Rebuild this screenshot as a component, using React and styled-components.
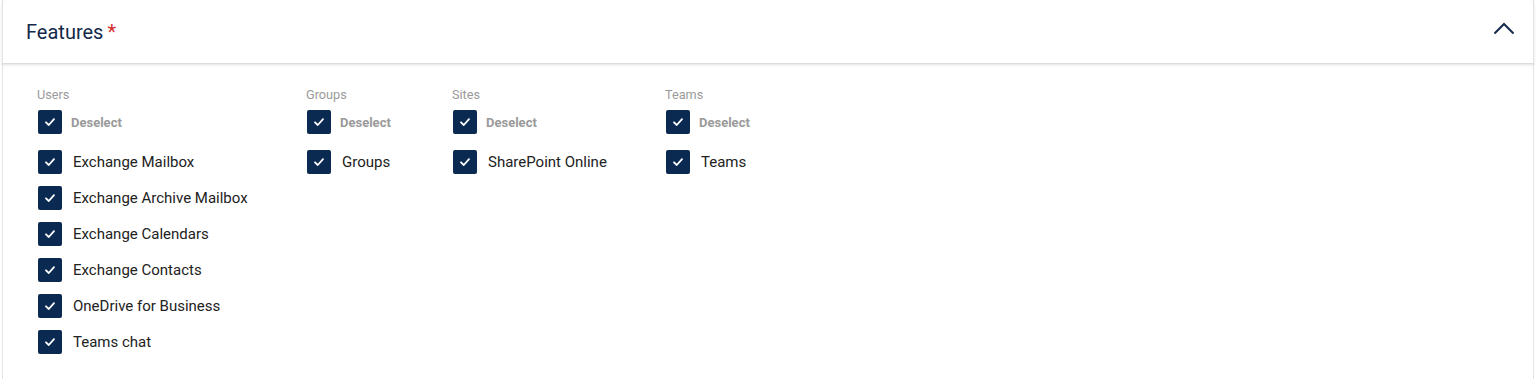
import React from 'react'
import styled, { createGlobalStyle } from 'styled-components'

const Global = createGlobalStyle`
  body {
    margin: 0;
    background: #fff;
    font-family: Roboto, "Liberation Sans", Arial, sans-serif;
  }
`

const Panel = styled.div`
  margin: 0 2px;
  height: 379px;
  border-left: 1px solid #e4e4e4;
  border-right: 1px solid #e4e4e4;
  box-sizing: border-box;
`

const Header = styled.div`
  display: flex;
  align-items: center;
  justify-content: space-between;
  height: 63px;
  padding: 0 18px 0 24px;
  border-bottom: 1px solid #dcdcdc;
  border-radius: 6px 6px 0 0;
  box-shadow: 0 1px 3px rgba(0, 0, 0, 0.12);
  margin: 0 -1px;
`

const Title = styled.div`
  font-size: 20px;
  color: #13294b;
  span {
    color: #d32f2f;
    margin-left: 4px;
  }
`

const Toggle = styled.svg`
  width: 24px;
  height: 24px;
`

const Body = styled.div`
  display: grid;
  grid-template-columns: 269px 146px 213px auto;
  padding: 24px 34px;
`

const Column = styled.div`
  display: flex;
  flex-direction: column;
`

const Label = styled.div`
  font-size: 12.7px;
  color: #9a9a9a;
  line-height: 14px;
  margin-bottom: 8px;
`

const Row = styled.label`
  display: flex;
  align-items: center;
  height: 36px;
  gap: 11px;
  font-size: 15px;
  color: #222;
  white-space: nowrap;
`

const DeselectRow = styled(Row)`
  height: 24px;
  gap: 9px;
  font-size: 13px;
  font-weight: 700;
  color: #9a9a9a;
  margin-bottom: 10px;
`

const Box = styled.span`
  width: 24px;
  height: 24px;
  border-radius: 2px;
  background: #0b2a52;
  display: flex;
  align-items: center;
  justify-content: center;
  flex-shrink: 0;
  margin-left: 1px;
`

const Check = () => (
  <Box>
    <svg width="12" height="12" viewBox="0 0 12 12">
      <path d="M2 6.3 L4.8 9 L10 3.2" fill="none" stroke="#fff" strokeWidth="1.8" strokeLinecap="round" strokeLinejoin="round" />
    </svg>
  </Box>
)

const groups = [
  {
    name: 'Users',
    items: [
      'Exchange Mailbox',
      'Exchange Archive Mailbox',
      'Exchange Calendars',
      'Exchange Contacts',
      'OneDrive for Business',
      'Teams chat',
    ],
  },
  { name: 'Groups', items: ['Groups'] },
  { name: 'Sites', items: ['SharePoint Online'] },
  { name: 'Teams', items: ['Teams'] },
]

const App = () => {
  return (
    <Panel>
      <Global />
      <Header>
        <Title>
          Features<span>*</span>
        </Title>
        <Toggle viewBox="0 0 24 24">
          <path d="M2.5 13.5 L12 4 L21.5 13.5" fill="none" stroke="#13294b" strokeWidth="2" />
        </Toggle>
      </Header>
      <Body>
        {groups.map(g => (
          <Column key={g.name}>
            <Label>{g.name}</Label>
            <DeselectRow>
              <Check />
              Deselect
            </DeselectRow>
            {g.items.map(i => (
              <Row key={i}>
                <Check />
                {i}
              </Row>
            ))}
          </Column>
        ))}
      </Body>
    </Panel>
  )
}

export default App
